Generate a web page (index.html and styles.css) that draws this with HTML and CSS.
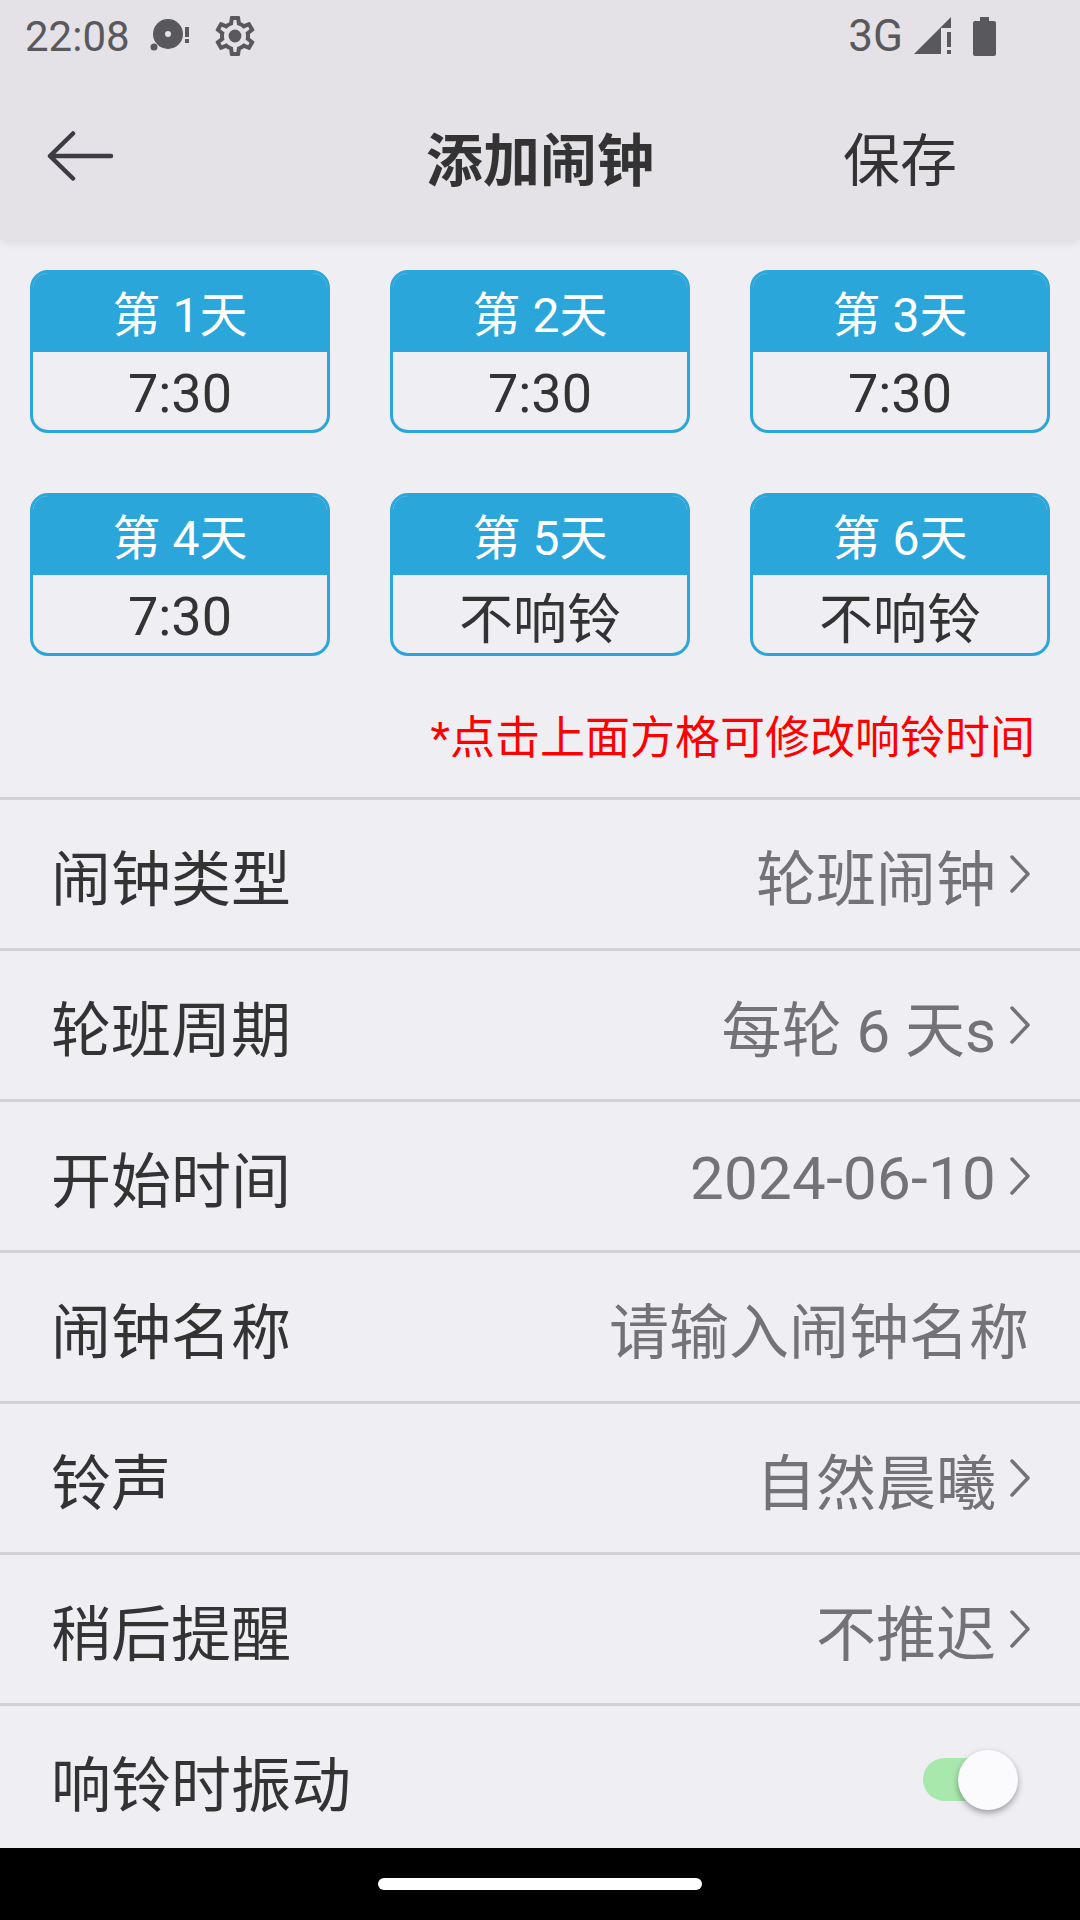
FILE: index.html
```html
<!DOCTYPE html>
<html lang="zh-CN">
<head>
    <meta charset="UTF-8">
    <meta name="viewport" content="width=device-width, initial-scale=1.0">
    <title>添加闹钟</title>
    <link rel="stylesheet" href="styles.css">
</head>
<body>
    <header class="top">
        <div class="status-bar">
            <div class="status-left">
                <span class="clock">22:08</span>
                <svg class="icon-disc" width="46" height="40" viewBox="0 0 46 40">
                    <circle cx="21" cy="18" r="15" fill="#59585d"/>
                    <circle cx="21" cy="18" r="3" fill="#e4e2e6"/>
                    <circle cx="7" cy="31" r="3.5" fill="#59585d"/>
                    <rect x="38" y="11" width="4" height="10" fill="#59585d"/>
                    <rect x="38" y="23" width="4" height="4" fill="#59585d"/>
                </svg>
                <svg class="icon-gear" width="48" height="48" viewBox="0 0 24 24">
                    <path fill="#59585d" d="M19.43 12.98c.04-.32.07-.64.07-.98 0-.34-.03-.66-.07-.98l2.11-1.65c.19-.15.24-.42.12-.64l-2-3.46c-.09-.16-.26-.25-.44-.25-.06 0-.12.01-.17.03l-2.49 1c-.52-.4-1.08-.73-1.69-.98l-.38-2.65C14.46 2.18 14.25 2 14 2h-4c-.25 0-.46.18-.49.42l-.38 2.65c-.61.25-1.17.59-1.69.98l-2.49-1c-.06-.02-.12-.03-.18-.03-.17 0-.34.09-.43.25l-2 3.46c-.13.22-.07.49.12.64l2.11 1.65c-.04.32-.07.65-.07.98 0 .33.03.66.07.98l-2.11 1.65c-.19.15-.24.42-.12.64l2 3.46c.09.16.26.25.44.25.06 0 .12-.01.17-.03l2.49-1c.52.4 1.08.73 1.69.98l.38 2.65c.03.24.24.42.49.42h4c.25 0 .46-.18.49-.42l.38-2.65c.61-.25 1.17-.59 1.69-.98l2.49 1c.06.02.12.03.18.03.17 0 .34-.09.43-.25l2-3.46c.12-.22.07-.49-.12-.64l-2.11-1.65zm-1.98-1.71c.04.31.05.52.05.73 0 .21-.02.43-.05.73l-.14 1.13.89.7 1.08.84-.7 1.21-1.27-.51-1.04-.42-.9.68c-.43.32-.84.56-1.25.73l-1.06.43-.16 1.13-.2 1.35h-1.4l-.19-1.35-.16-1.13-1.06-.43c-.43-.18-.83-.41-1.23-.71l-.91-.7-1.06.43-1.27.51-.7-1.21 1.08-.84.89-.7-.14-1.13c-.03-.31-.05-.54-.05-.74s.02-.43.05-.73l.14-1.13-.89-.7-1.08-.84.7-1.21 1.27.51 1.04.42.9-.68c.43-.32.84-.56 1.25-.73l1.06-.43.16-1.13.2-1.35h1.39l.19 1.35.16 1.13 1.06.43c.43.18.83.41 1.23.71l.91.7 1.06-.43 1.27-.51.7 1.21-1.07.85-.89.7.14 1.13z"/>
                    <circle cx="12" cy="12" r="3.2" fill="#59585d"/>
                </svg>
            </div>
            <div class="status-right">
                <span class="net">3G</span>
                <svg width="37" height="38" viewBox="0 0 37 38">
                    <path fill="#59585d" d="M0 37 37 0V11H27V37Z"/>
                    <rect x="33" y="15" width="4" height="15" fill="#59585d"/>
                    <rect x="33" y="33" width="4" height="4" fill="#59585d"/>
                </svg>
                <svg width="23" height="39" viewBox="0 0 23 39">
                    <path fill="#59585d" d="M7 0h9v4h5a2 2 0 0 1 2 2v31a2 2 0 0 1-2 2H2a2 2 0 0 1-2-2V6a2 2 0 0 1 2-2h5Z"/>
                </svg>
            </div>
        </div>
        <div class="toolbar">
            <div class="back">
                <svg width="70" height="50" viewBox="0 0 70 50">
                    <path d="M26 2.500 3 25 26 47.500M3 25H64" fill="none" stroke="#3d3c45" stroke-width="4.500" stroke-linecap="round" stroke-linejoin="round"/>
                </svg>
            </div>
            <h1 class="title">添加闹钟</h1>
            <div class="save">保存</div>
        </div>
    </header>

    <main class="content">
        <section class="days">
            <div class="day">
                <div class="day-head">第 1天</div>
                <div class="day-time num">7:30</div>
            </div>
            <div class="day">
                <div class="day-head">第 2天</div>
                <div class="day-time num">7:30</div>
            </div>
            <div class="day">
                <div class="day-head">第 3天</div>
                <div class="day-time num">7:30</div>
            </div>
            <div class="day">
                <div class="day-head">第 4天</div>
                <div class="day-time num">7:30</div>
            </div>
            <div class="day">
                <div class="day-head">第 5天</div>
                <div class="day-time">不响铃</div>
            </div>
            <div class="day">
                <div class="day-head">第 6天</div>
                <div class="day-time">不响铃</div>
            </div>
        </section>

        <p class="hint">*点击上面方格可修改响铃时间</p>

        <div class="row">
            <span class="row-label">闹钟类型</span>
            <span class="row-value">轮班闹钟</span>
            <svg class="chevron" width="20" height="38" viewBox="0 0 20 38"><path d="M2 2 18 19 2 36"/></svg>
        </div>
        <div class="row">
            <span class="row-label">轮班周期</span>
            <span class="row-value">每轮 6 天s</span>
            <svg class="chevron" width="20" height="38" viewBox="0 0 20 38"><path d="M2 2 18 19 2 36"/></svg>
        </div>
        <div class="row">
            <span class="row-label">开始时间</span>
            <span class="row-value row-date">2024-06-10</span>
            <svg class="chevron" width="20" height="38" viewBox="0 0 20 38"><path d="M2 2 18 19 2 36"/></svg>
        </div>
        <div class="row">
            <span class="row-label">闹钟名称</span>
            <span class="row-value">请输入闹钟名称</span>
        </div>
        <div class="row">
            <span class="row-label">铃声</span>
            <span class="row-value">自然晨曦</span>
            <svg class="chevron" width="20" height="38" viewBox="0 0 20 38"><path d="M2 2 18 19 2 36"/></svg>
        </div>
        <div class="row">
            <span class="row-label">稍后提醒</span>
            <span class="row-value">不推迟</span>
            <svg class="chevron" width="20" height="38" viewBox="0 0 20 38"><path d="M2 2 18 19 2 36"/></svg>
        </div>
        <div class="row">
            <span class="row-label">响铃时振动</span>
            <div class="switch"><span class="switch-thumb"></span></div>
        </div>
    </main>

    <footer class="nav-bar">
        <span class="home-pill"></span>
    </footer>
</body>
</html>
```

FILE: styles.css
```css
* {
    box-sizing: border-box;
}

body {
    font-family: Roboto, 'Noto Sans CJK SC', sans-serif;
    background-color: #efeef3;
    margin: 0;
    padding: 0;
    width: 1080px;
    height: 1920px;
    display: flex;
    flex-direction: column;
    overflow: hidden;
}

.top {
    height: 240px;
    flex: none;
    background-color: #e4e2e6;
    box-shadow: 0 1px 10px rgba(0, 0, 0, 0.1);
    position: relative;
}

.status-bar {
    height: 72px;
    display: flex;
    justify-content: space-between;
    align-items: center;
    color: #59585d;
    padding: 0 84px 0 25px;
}

.status-left,
.status-right {
    display: flex;
    align-items: center;
}

.clock {
    font-size: 42px;
    margin-right: 17px;
}

.icon-gear {
    margin-left: 18px;
}

.net {
    font-size: 44px;
    margin-right: 11px;
}

.status-right svg + svg {
    margin-left: 22px;
}

.toolbar {
    height: 168px;
    display: grid;
    grid-template-columns: 300px 480px 300px;
    align-items: center;
    color: #333;
}

.back {
    padding-left: 47px;
    display: flex;
}

.title {
    margin: 0;
    font-size: 57px;
    font-weight: 700;
    text-align: center;
}

.save {
    font-size: 57px;
    padding-right: 60px;
    text-align: center;
}

.content {
    flex: 1;
    overflow: hidden;
}

.days {
    display: grid;
    grid-template-columns: repeat(3, 300px);
    gap: 60px;
    padding: 30px 30px 0;
}

.day {
    height: 163px;
    border: 3px solid #2ba6db;
    border-radius: 18px;
    overflow: hidden;
    display: flex;
    flex-direction: column;
}

.day-head {
    height: 79px;
    flex: none;
    padding-bottom: 3px;
    background-color: #2ba6db;
    color: #fff;
    font-size: 48px;
    display: flex;
    align-items: center;
    justify-content: center;
}

.day-time {
    flex: 1;
    padding-top: 1px;
    color: #333;
    font-size: 54px;
    display: flex;
    align-items: center;
    justify-content: center;
}

.day-time.num {
    padding-top: 5px;
}

.hint {
    height: 141px;
    margin: 0;
    padding: 15px 45px 0 0;
    color: #f00;
    font-size: 45px;
    display: flex;
    align-items: center;
    justify-content: flex-end;
}

.row {
    height: 151px;
    flex: none;
    border-top: 3px solid #d2d1d6;
    display: flex;
    align-items: center;
    padding: 0 51px;
}

.row-label {
    flex: 1;
    color: #333;
    font-size: 60px;
}

.row-value {
    color: #737277;
    font-size: 60px;
}

.row-date {
    padding-top: 5px;
    letter-spacing: 0.3px;
}

.chevron {
    margin-left: 14px;
    margin-right: -1px;
    fill: none;
    stroke: #737277;
    stroke-width: 3.500;
    stroke-linecap: round;
    stroke-linejoin: round;
}

.switch {
    width: 82px;
    height: 43px;
    margin-top: -2px;
    margin-right: 24px;
    background-color: #a8e8ad;
    border-radius: 22px;
    position: relative;
}

.switch-thumb {
    position: absolute;
    right: -13px;
    top: -8px;
    width: 60px;
    height: 60px;
    border-radius: 50%;
    background-color: #fbfafc;
    box-shadow: 0 3px 6px rgba(0, 0, 0, 0.35);
}

.nav-bar {
    height: 72px;
    flex: none;
    background-color: #000;
    display: flex;
    align-items: center;
    justify-content: center;
}

.home-pill {
    width: 324px;
    height: 12px;
    border-radius: 6px;
    background-color: #fff;
}
```
